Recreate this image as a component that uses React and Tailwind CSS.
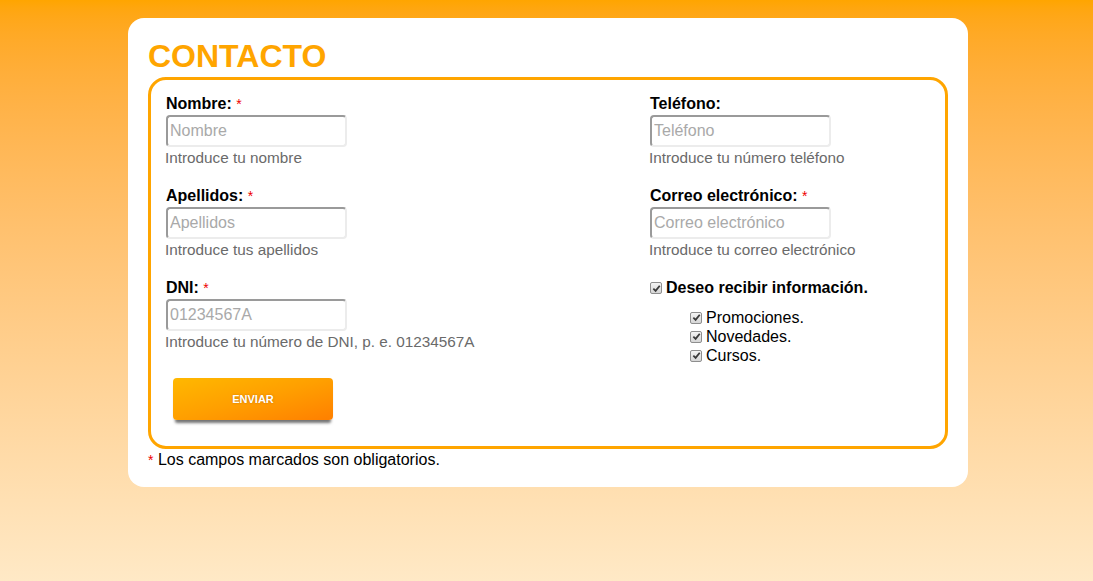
import React from "react";

const font = { fontFamily: '"Liberation Sans", Arial, sans-serif' };

function Req() {
  return <span className="text-[#ee0000] font-normal text-[14px] align-top">*</span>;
}

function Field({ label, required, placeholder, help }) {
  return (
    <div className="mb-[21px]">
      <div className="text-[16px] leading-[18px] font-bold text-black">
        {label}
        {required && (
          <>
            {" "}
            <Req />
          </>
        )}
      </div>
      <input
        type="text"
        placeholder={placeholder}
        className="mt-[2px] block w-[181px] h-[32px] px-[2px] text-[16px] text-[#333] placeholder:text-[#a9a9a9] bg-white border-2 border-t-[#9a9a9a] border-l-[#9a9a9a] border-r-[#ececec] border-b-[#ececec] rounded-[4px] outline-none"
        style={font}
      />
      <div className="mt-[2px] text-[15.3px] leading-[17px] text-[#6a6a6a] -ml-[1px]">{help}</div>
    </div>
  );
}

function Check() {
  return (
    <span className="inline-flex items-center justify-center w-[12px] h-[12px] border border-[#8e8e8e] rounded-[2px] bg-gradient-to-b from-[#f4f4f4] to-[#d6d6d6] shrink-0">
      <svg width="9" height="9" viewBox="0 0 10 10">
        <path d="M1.5 5.2 L4 7.6 L8.6 2" fill="none" stroke="#3a3a3a" strokeWidth="2" />
      </svg>
    </span>
  );
}

export default function App() {
  return (
    <div
      className="min-h-screen bg-gradient-to-b from-[#ffa500] to-[#ffe9c6] pt-[18px] pb-[40px]"
      style={font}
    >
      <div className="ml-[128px] w-[840px] bg-white rounded-[16px] px-[20px] pt-[22px] pb-[18px]">
        <h1 className="text-[32px] leading-[32px] font-bold text-[#ffa500]">CONTACTO</h1>

        <div className="mt-[5px] border-[3px] border-[#ffa500] rounded-[18px] pl-[15px] pt-[15px] pb-[26px] flex">
          {/* Left column */}
          <div className="w-[484px]">
            <Field label="Nombre:" required placeholder="Nombre" help="Introduce tu nombre" />
            <Field label="Apellidos:" required placeholder="Apellidos" help="Introduce tus apellidos" />
            <Field
              label="DNI:"
              required
              placeholder="01234567A"
              help="Introduce tu número de DNI, p. e. 01234567A"
            />
            <button
              type="button"
              className="ml-[7px] mt-[7px] w-[160px] h-[42px] rounded-[4px] bg-gradient-to-br from-[#ffb800] via-[#ff9f00] to-[#ff7f00] text-white text-[11px] font-bold shadow-[0_5px_3px_-2px_rgba(0,0,0,0.55)] [text-shadow:0_0_2px_rgba(150,70,0,0.5)]"
              style={font}
            >
              ENVIAR
            </button>
          </div>

          {/* Right column */}
          <div className="flex-1">
            <Field label="Teléfono:" placeholder="Teléfono" help="Introduce tu número teléfono" />
            <Field
              label="Correo electrónico:"
              required
              placeholder="Correo electrónico"
              help="Introduce tu correo electrónico"
            />
            <div className="flex items-center gap-[4px] text-[16px] leading-[18px] font-bold text-black">
              <Check />
              <span>Deseo recibir información.</span>
            </div>
            <div className="mt-[11px] pl-[40px] text-[16px] leading-[19px] text-black">
              {["Promociones.", "Novedades.", "Cursos."].map((t) => (
                <div key={t} className="flex items-center gap-[4px]">
                  <Check />
                  <span>{t}</span>
                </div>
              ))}
            </div>
          </div>
        </div>

        <div className="mt-[2px] text-[16px] leading-[18px] text-black">
          <span className="text-[#ee0000] text-[14px] align-top">*</span> Los campos marcados son obligatorios.
        </div>
      </div>
    </div>
  );
}
